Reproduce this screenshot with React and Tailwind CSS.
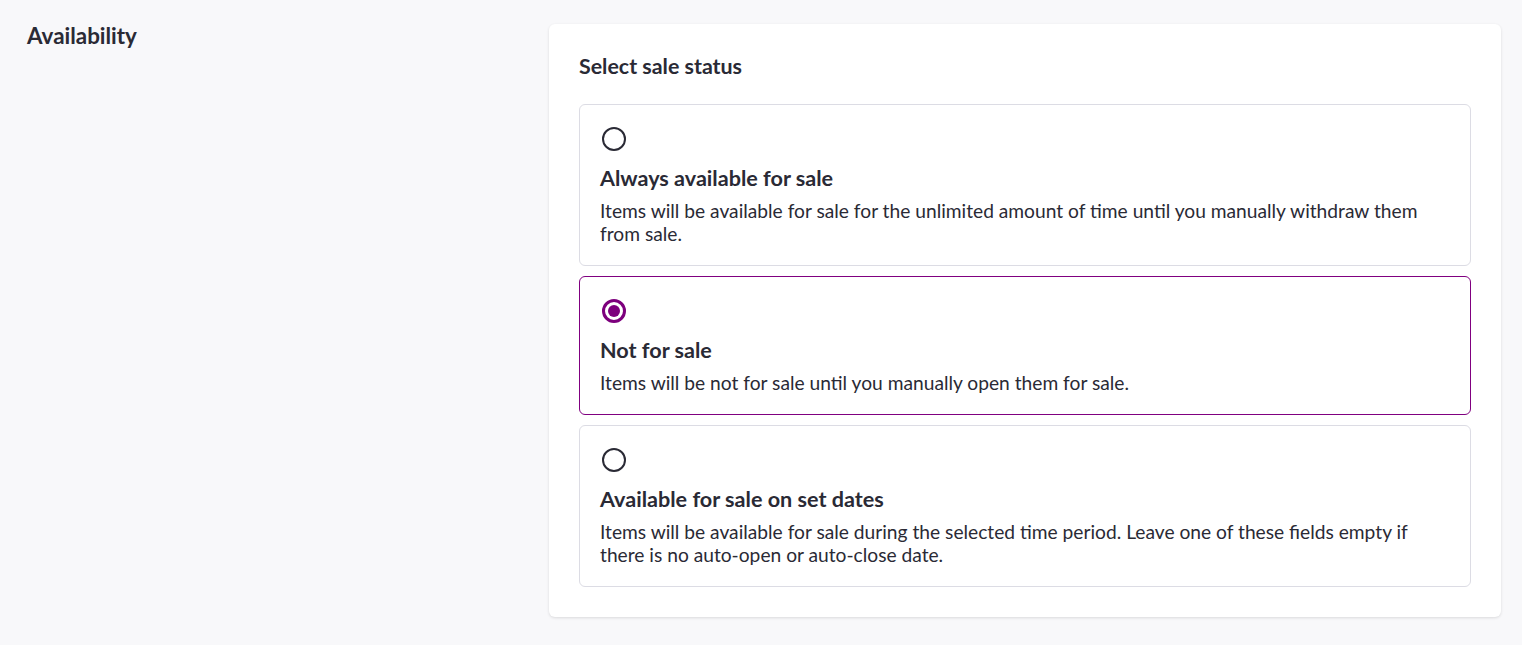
import React, { useState } from 'react';

const options = [
    {
        id: 'always',
        title: 'Always available for sale',
        text: 'Items will be available for sale for the unlimited amount of time until you manually withdraw them from sale.',
    },
    {
        id: 'not',
        title: 'Not for sale',
        text: 'Items will be not for sale until you manually open them for sale.',
    },
    {
        id: 'dates',
        title: 'Available for sale on set dates',
        text: 'Items will be available for sale during the selected time period. Leave one of these fields empty if there is no auto-open or auto-close date.',
    },
];

const Radio = ({ checked }) => (
    <span
        className={
            'ml-[2px] flex h-6 w-6 items-center justify-center rounded-full ' +
            (checked ? 'border-[3px] border-[#7d007d]' : 'border-2 border-[#2a2a35]')
        }
    >
        {checked && <span className="h-3 w-3 rounded-full bg-[#7d007d]" />}
    </span>
);

const App = () => {
    const [status, setStatus] = useState('not');

    return (
        <div className="min-h-screen bg-[#f8f8fa] font-['Lato',sans-serif] text-[#2a2a35]">
            <div className="flex pt-6 pl-[27px] pr-[21px]">
                {/* Left label */}
                <div className="w-[522px] shrink-0">
                    <h2 className="text-[22.4px] font-bold leading-6">Availability</h2>
                </div>

                {/* Card */}
                <div className="flex-1 rounded-md bg-white px-[30px] pt-[30px] pb-[30px] shadow-[0_1px_3px_rgba(0,0,0,0.12)]">
                    <h3 className="text-[21.4px] font-bold leading-6">Select sale status</h3>

                    <div className="mt-[26px] flex flex-col gap-[10px]">
                        {options.map((o) => {
                            const checked = status === o.id;
                            return (
                                <button
                                    key={o.id}
                                    onClick={() => setStatus(o.id)}
                                    className={
                                        'flex flex-col items-start rounded-md border bg-white px-5 pt-[22px] pb-[20px] text-left ' +
                                        (checked ? 'border-[#800080]' : 'border-[#dcdce4]')
                                    }
                                >
                                    <Radio checked={checked} />
                                    <div className="mt-[13px] text-[21.6px] font-bold leading-7">{o.title}</div>
                                    <p className="mt-[7px] text-[19.2px] leading-[23px]">{o.text}</p>
                                </button>
                            );
                        })}
                    </div>
                </div>
            </div>
        </div>
    );
};

export default App;
